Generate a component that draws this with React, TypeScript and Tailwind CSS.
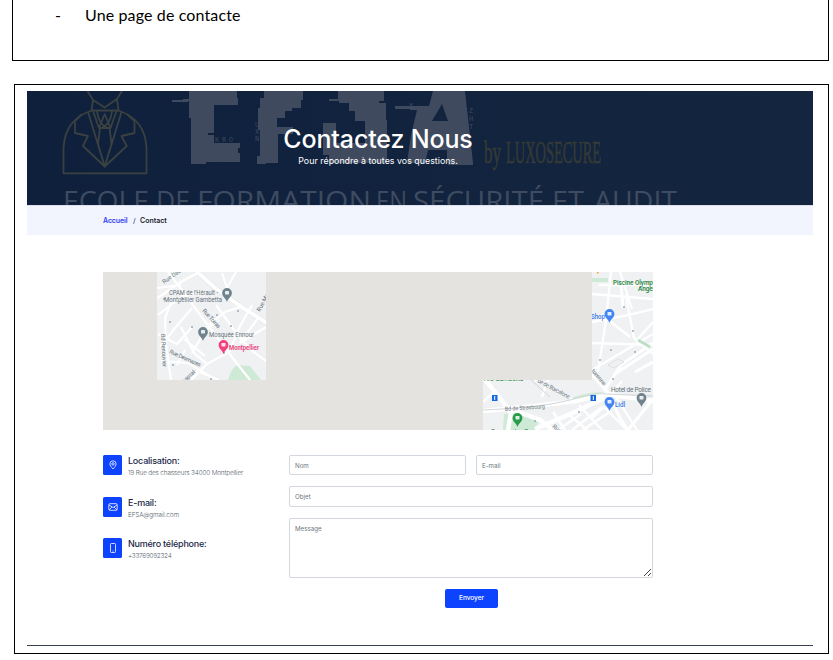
import type { ReactNode } from "react";

function HeroArt() {
  return (
    <svg className="absolute inset-0" width="786" height="114" viewBox="27 91 786 114" aria-hidden="true">
      <g fill="none" stroke="#3b4140" strokeWidth="1.8" strokeLinejoin="round">
        <path d="M63.5 173.3V148Q65 119 92 110.5H118Q145 119 146.5 148V173.3Z" />
        <path d="M87.5 91L93 100L104.7 107.5L117 99L122 91M93 100L91.5 110.5M117 99L118.5 110.5" />
        <path d="M82 114L75 121V133L88 136L83 146L104.7 166.5L126.7 146L121.5 136L134.5 133V121L127 114" />
        <path d="M88 112L104.7 166.5L121.5 112M93 111L99 128H110.5L116.5 111M99 128L104.7 114L110.5 128M100 128L98 144L104.7 166.5L111.5 144L109.5 128" />
        <path d="M97 111Q98 123 107 128M112 111Q111 123 102 128" />
      </g>
      <g fill="#3f4a5e">
        <path d="M189 91H237V98H238V105H214V133H208V135H214V143H240V148H238V153H240V162H206V164H191V118H189Z" />
        <path d="M172 100H188V102H172ZM183 99H197V101H183Z" />
        <path d="M264 91H303V100H301V108H292V111H285V118H277V127H293V134H278V163H266V164H257V156H260V130H258V108H260V98H264Z" />
        <path d="M329 99H338V91H384V101H379V103H386V120H387V163H329V155H323V123H336V143H365V121H355V111H349V103H339V101H329Z" />
        <path d="M433 91H465L473 163H447V150H428L425 163H407L411 135L417 110H410V109H395V106H429ZM442 104L432 121H448Z" fillRule="evenodd" />
        <path d="M448 163H473V165H448Z" />
      </g>
      <g fill="#3f4a5e" fontFamily="Liberation Mono" fontSize="7">
        <text x="215" y="142" textLength="18">KRO</text>
        <text x="255" y="127">U</text>
        <text x="255" y="134">X</text>
        <text x="255" y="141">N</text>
        <text x="409" y="108">X</text>
        <text x="469" y="113">Z</text>
        <text x="469" y="121">H</text>
        <text x="469" y="129">T</text>
      </g>
      <g fontFamily="Liberation Serif" fontSize="32" fill="#353a37" stroke="#353a37" strokeWidth=".7">
        <text x="484" y="163" textLength="17" lengthAdjust="spacingAndGlyphs">by</text>
        <text x="506" y="163" textLength="95" lengthAdjust="spacingAndGlyphs">LUXOSECURE</text>
      </g>
      <g fontFamily="Open Sans" fontSize="27" fill="#3f4b60">
        <text x="63" y="210.5" textLength="86" lengthAdjust="spacingAndGlyphs">ECOLE</text>
        <text x="156" y="210.5" textLength="34" lengthAdjust="spacingAndGlyphs">DE</text>
        <text x="197" y="210.5" textLength="174" lengthAdjust="spacingAndGlyphs">FORMATION</text>
        <text x="376" y="210.5" textLength="31" lengthAdjust="spacingAndGlyphs">EN</text>
        <text x="413" y="210.5" textLength="131" lengthAdjust="spacingAndGlyphs">SÉCURITÉ</text>
        <text x="552" y="210.5" textLength="32" lengthAdjust="spacingAndGlyphs">ET</text>
        <text x="594" y="210.5" textLength="83" lengthAdjust="spacingAndGlyphs">AUDIT</text>
      </g>
    </svg>
  );
}

function Pin({ x, y, color }: { x: number; y: number; color: string }) {
  return (
    <g transform={`translate(${x} ${y})`}>
      <path d="M0 8C-1 4-4.9 3-4.9-1A4.9 4.9 0 0 1 4.9-1C4.9 3 1 4 0 8Z" fill={color} />
      <rect x="-2" y="-3" width="4" height="3.4" rx=".6" fill="#fff" opacity=".85" />
    </g>
  );
}

function StreetMap() {
  return (
    <svg className="block" width="550" height="158" viewBox="103 272 550 158" fontFamily="Roboto">
      <defs>
        <clipPath id="west"><rect x="157" y="272" width="109" height="108" /></clipPath>
        <clipPath id="east"><path d="M592 272H653V430H483V380H592Z" /></clipPath>
      </defs>
      <rect x="103" y="272" width="550" height="158" fill="#e5e3df" />
      <g clipPath="url(#west)">
        <rect x="157" y="272" width="109" height="108" fill="#eff1f3" />
        <path d="M228 380Q232 366 238 365L250 366L261 380Z" fill="#ceead6" />
        <g fill="none" stroke="#fff" strokeWidth="2.2">
          <path d="M194 269L214 287L240 306L270 325" stroke="#dfe2e5" strokeWidth="5" />
          <path d="M194 269L214 287L240 306L270 325" strokeWidth="4" />
          <path d="M156 299L184 280L200 272M157 288L181 285M168 272L185 294L201 316L235 361L250 380M181 296L206 292M192 308L175 328L160 347M158 315L180 298M172 300L165 318L166 345L171 380" />
          <path d="M192 327L177 344L158 334M181 327L194 353L207 364L229 352L240 326L252 305M206 327L225 312L240 307M216 305L237 334L251 350L266 361M192 353L205 331L219 320M207 364L191 380M161 361L188 363L213 378M222 273L229 294M236 272L224 293M258 318L240 343L266 327" />
          <path d="M184 339L205 356M177 365L185 350M190 380L197 371L219 380" />
        </g>
        <g fill="#9aa7c0">
          {[[192, 327], [182, 298], [238, 311], [170, 322], [224, 353], [211, 379], [173, 365], [231, 326], [164, 299], [217, 315]].map(([x, y]) => (
            <circle key={`${x}-${y}`} cx={x} cy={y} r="1" />
          ))}
        </g>
        <g fill="#65717a" fontSize="6.4">
          <text x="169" y="295" textLength="49" lengthAdjust="spacingAndGlyphs">CPAM de l'Hérault -</text>
          <text x="164" y="301.5" textLength="58" lengthAdjust="spacingAndGlyphs">Montpellier Gambetta</text>
          <text x="209" y="337" textLength="45" lengthAdjust="spacingAndGlyphs">Mosquée Ennour</text>
          <text fontSize="5.8" transform="translate(164 284) rotate(-35)">Rue Dau</text>
          <text fontSize="5.8" transform="translate(202 311) rotate(48)" textLength="24">Rue Toiras</text>
          <text fontSize="5.8" transform="translate(260 312) rotate(-62)">Rue Mar</text>
          <text fontSize="5.8" transform="translate(161 334) rotate(87)" textLength="33">Bd Renouvier</text>
          <text fontSize="5.8" transform="translate(169 353) rotate(24)" textLength="34">Rue Desmazes</text>
          <text fontSize="5.8" transform="translate(181 386) rotate(-42)">Chaptal</text>
        </g>
        <text x="229" y="350" fontSize="6.4" fontWeight="600" fill="#ea3978" textLength="30" lengthAdjust="spacingAndGlyphs">Montpellier</text>
        <Pin x={227} y={294} color="#708490" />
        <Pin x={203} y={333} color="#708490" />
        <Pin x={223.5} y={346} color="#f13f7f" />
      </g>
      <g clipPath="url(#east)">
        <rect x="483" y="272" width="170" height="158" fill="#eff1f3" />
        <path d="M592 278H608V282H592ZM504 414L525 412L538 422L535 430H503ZM571 398Q590 391 607 392L606 395Q588 394 571 400Z" fill="#ceead6" />
        <g fill="none" stroke="#fff" strokeWidth="2.3">
          <path d="M592 294L653 299M592 343L653 345M611 272L606 320L598 372M626 297L634 338L653 354M653 322L637 340M592 370L653 334M602 315L630 337M620 272L632 309M599 285H653M592 322L624 316L653 309" />
          <path d="M591 374L607 391L620 418L628 430M604 391L621 365L653 343M615 374L653 349M628 430L653 399M635 372L653 362M621 284L623 308" strokeWidth="3" />
          <path d="M483 411L535 406L576 401L607 394L653 401M535 429L575 412L604 398M483 377L511 412L508 430M510 409L540 420L553 430" strokeWidth="4.5" />
          <path d="M622 381L613 392L637 430M535 380L574 400M483 402L495 391M548 380L542 397M553 412L565 430M579 405L602 430M568 414L587 430M592 418L604 407L627 430M572 430L602 407M583 430L611 411M558 430L581 414" />
        </g>
        <path d="M483 410Q540 408 570 400T606 394L653 396M531 380L550 397" fill="none" stroke="#c5cbd0" strokeWidth=".8" />
        <path d="M638 340L650 347" stroke="#bddfc8" strokeWidth="3" />
        <path d="M608 365L618 359L624 362L614 368Z" fill="none" stroke="#dfe2e5" />
        <g fill="#9aa7c0">
          {[[633, 331], [611, 350], [600, 360], [535, 421], [579, 412], [635, 352], [613, 379], [624, 307]].map(([x, y]) => (
            <circle key={`${x}-${y}`} cx={x} cy={y} r="1" />
          ))}
        </g>
        <g fill="#65717a" fontSize="6.4">
          <text x="611" y="392" textLength="40">Hotel de Police</text>
          <text transform="translate(505 411) rotate(-4)" fontSize="5.8" textLength="40" lengthAdjust="spacingAndGlyphs">Bd de Strasbourg</text>
          <text transform="translate(537 382) rotate(28)" fontSize="5.8" textLength="36">ue de Barcelone</text>
          <text transform="translate(591 371) rotate(50)" fontSize="5.8">turenne</text>
          <text transform="translate(552 427) rotate(40)" fontSize="5.8">Rue</text>
        </g>
        <g fill="#188038" fontSize="6.4" fontWeight="500">
          <text x="613" y="284.5" textLength="45" lengthAdjust="spacingAndGlyphs">Piscine Olympiq</text>
          <text x="638" y="291">Angelo</text>
          <text x="491" y="434" fontWeight="400">Square des Rennes</text>
          <text x="484" y="381" fontWeight="400">Arc Gambetta</text>
        </g>
        <g fill="#3c78e7" fontSize="6.6" fontWeight="500">
          <text x="591" y="319" textLength="14" lengthAdjust="spacingAndGlyphs">Shop</text>
          <text x="615" y="407" textLength="10" lengthAdjust="spacingAndGlyphs">Lidl</text>
        </g>
        <Pin x={609.5} y={315} color="#4285f4" />
        <Pin x={609.5} y={403} color="#4285f4" />
        <Pin x={641.5} y={399} color="#708490" />
        <Pin x={517.5} y={419} color="#269c4b" />
        <g fill="#1769e0">
          <rect x="492" y="395" width="5.5" height="6" />
          <rect x="590.5" y="395" width="5.5" height="6" />
        </g>
        <path d="M494.7 396V400M593.3 396V400" stroke="#fff" />
        <rect x="597" y="272" width="1.5" height="1.5" fill="#f29b38" />
      </g>
    </svg>
  );
}

function Contact({ title, detail, detailClass, children }: { title: string; detail: string; detailClass: string; children: ReactNode }) {
  return (
    <div className="flex h-[41.5px] gap-[6px]">
      <div className="flex h-[20px] w-[19px] shrink-0 items-center justify-center rounded-[1.5px] bg-[#0d42ff]">
        <svg width="10" height="10" viewBox="0 0 10 10" fill="none" stroke="#e4eaff" strokeWidth=".9">{children}</svg>
      </div>
      <div className="whitespace-nowrap">
        <h2 className="h-[12px] font-[Inter] text-[9px] leading-[12px] font-medium tracking-[-0.22px] text-[#1b2746]">{title}</h2>
        <p className={`font-[Inter] text-[6.4px] leading-[13px] font-light text-[#565f6e] ${detailClass}`}>{detail}</p>
      </div>
    </div>
  );
}

const field = "block w-full resize-none rounded-[2px] border border-[#d2d8de] bg-white px-[5px] font-[Inter] text-[6.2px] text-[#333] outline-none placeholder:text-[#6c757d]";

export default function App() {
  return (
    <div className="h-[660px] w-[833px] overflow-hidden bg-white font-[Inter]">
      <div className="ml-[12px] flex h-[61px] w-[817px] border border-t-0 border-black pt-[4px] pl-[42px] font-[Lato] text-[16px] leading-[21px] text-black">
        <span className="w-[30px]">-</span>
        <span className="tracking-[0.13px]">Une page de contacte</span>
      </div>
      <main className="mt-[23px] ml-[14px] h-[570px] w-[815px] border border-black px-[12px] pt-[6px]">
        <header className="relative h-[114px] w-[786px] overflow-hidden bg-linear-to-r from-[#0e203c] to-[#14263f] text-center text-white">
          <HeroArt />
          <div className="relative w-[702px] pt-[32px] whitespace-nowrap">
            <h1 className="text-[25px] leading-[32px] font-medium tracking-[-0.15px]">Contactez Nous</h1>
            <p className="text-[8.8px] leading-[12px] tracking-[0.04px]">Pour répondre à toutes vos questions.</p>
          </div>
        </header>
        <nav className="flex h-[30px] w-[786px] border-t border-[#dce1ec] bg-[#f2f5fe] pt-[9px] pl-[76px] text-[7px] leading-[12px] font-semibold whitespace-nowrap">
          <a className="w-[30px] tracking-[-0.1px] text-[#2f3ff5]">Accueil</a>
          <span className="w-[7px] font-medium text-[#34508d]">/</span>
          <span className="text-[#20242c]">Contact</span>
        </nav>
        <section className="mt-[37px] ml-[76px] w-[550px]">
          <StreetMap />
          <div className="mt-[25px] flex">
            <div className="w-[186px]">
              <Contact title="Localisation:" detail="19 Rue des chasseurs 34000 Montpellier" detailClass="tracking-[-0.16px]">
                <path d="M5 9C3 6.8 1.9 5.4 1.9 3.9A3.1 3.1 0 0 1 8.1 3.9C8.1 5.4 7 6.8 5 9Z" />
                <circle cx="5" cy="3.9" r="1.2" />
              </Contact>
              <Contact title="E-mail:" detail="EFSA@gmail.com" detailClass="tracking-[-0.12px]">
                <rect x=".8" y="1.7" width="8.4" height="6.6" rx="1" />
                <path d="M1 3L5 5.5L9 3M1 8L4 5M9 8L6 5" />
              </Contact>
              <Contact title="Numéro téléphone:" detail="+33769092324" detailClass="tracking-[-0.25px]">
                <rect x="2.5" y=".5" width="5" height="9" rx=".8" />
                <path d="M4.5 8H5.5" />
              </Contact>
            </div>
            <form className="w-[364px]">
              <div className="flex gap-[10px]">
                <input className={`${field} h-[20px]`} placeholder="Nom" />
                <input className={`${field} h-[20px]`} placeholder="E-mail" />
              </div>
              <input className={`${field} mt-[11px] h-[21px]`} placeholder="Objet" />
              <div className="relative mt-[11px]">
                <textarea className={`${field} h-[60px] pt-[5px] leading-[9px]`} placeholder="Message" />
                <svg className="absolute right-[2px] bottom-[2px]" width="7" height="7" viewBox="0 0 7 7" stroke="#444" strokeWidth="1"><path d="M0 7L7 0M4 7L7 4" /></svg>
              </div>
              <button type="button" className="mt-[11px] ml-[156px] block h-[19px] w-[53px] rounded-[2px] bg-[#0d42ff] text-[6.6px] leading-[19px] font-medium tracking-[-0.1px] text-white">Envoyer</button>
            </form>
          </div>
        </section>
        <div className="mt-[37px] h-px w-[786px] bg-[#37404e]" />
      </main>
    </div>
  );
}
